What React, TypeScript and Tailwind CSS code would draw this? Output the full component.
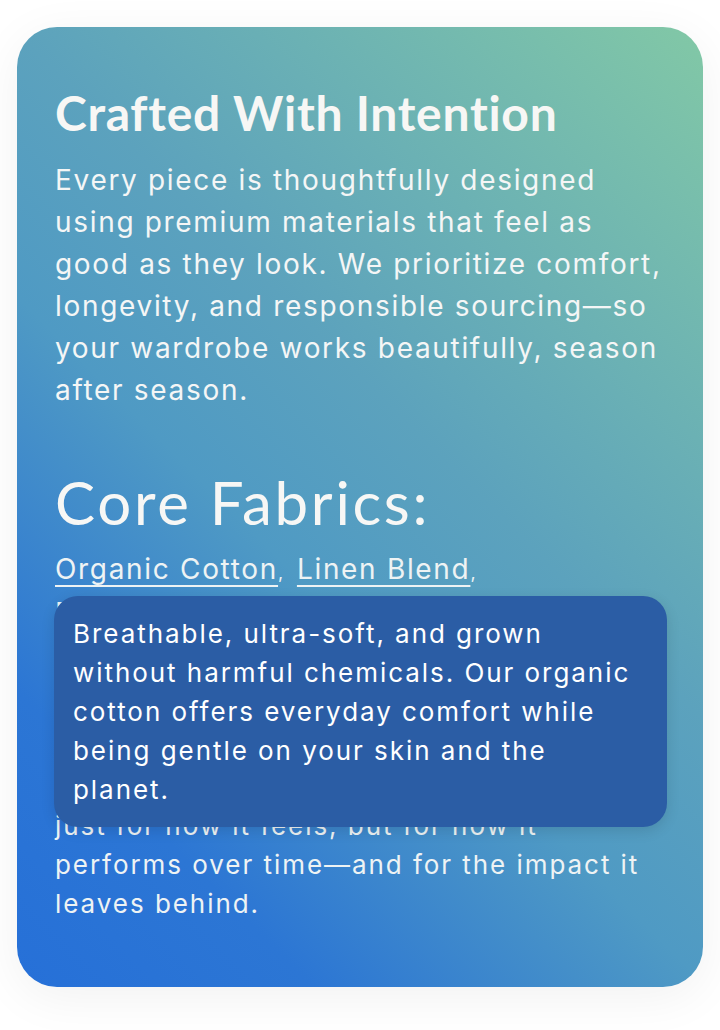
import { useState } from 'react'

const fabrics = ['Organic Cotton', 'Linen Blend', 'Deadstock Denim', 'Recycled Wool']

export default function App() {
  const [open] = useState('Organic Cotton')

  return (
    <div className="min-h-[1030px] bg-white px-[17px] pt-[27px] pb-[44px]">
      <section className="rounded-[40px] bg-[linear-gradient(45deg,#2670d8_0%,#2c76d4_18%,#4f9ac4_42%,#5ca2bd_58%,#82c8a6_100%)] px-[38px] pt-[58px] pb-[64px] text-white shadow-[0_10px_50px_rgba(0,0,0,0.06)] font-['Inter',sans-serif]">
        <h1 className="font-['Lato',sans-serif] text-[48px] font-bold leading-[56px] tracking-[0.015em] text-[#f7f7f5]">
          Crafted With Intention
        </h1>
        <p className="mt-[18px] text-[28px] leading-[42px] tracking-[0.06em] text-[#f4f6f6]">
          Every piece is thoughtfully designed using premium materials that feel as good as they look. We prioritize comfort, longevity, and responsible sourcing—so your wardrobe works beautifully, season after season.
        </p>

        <h2 className="mt-[55px] font-['Lato',sans-serif] text-[60px] font-normal leading-[72px] tracking-[0.045em] text-[#f7f7f5]">
          Core Fabrics:
        </h2>

        <div className="relative mt-[11px] text-[28px] leading-[40px] tracking-[0.06em] text-[#eef3f4]">
          <div className="flex flex-wrap">
            {fabrics.map((f) => (
              <span key={f} className="mr-[12px]">
                <span className="underline decoration-[2px] underline-offset-[6px]">{f}</span>
                <span className="text-[18px]">,</span>
              </span>
            ))}
          </div>

          {open && (
            <div className="absolute left-[-1px] top-[47px] z-10 w-[613px] rounded-[24px] bg-[#2b5da5] px-[19px] pt-[18px] pb-[18px] text-[26px] leading-[39px] tracking-[0.075em] text-white shadow-[0_4px_14px_rgba(0,0,0,0.12)]">
              Breathable, ultra-soft, and grown without harmful chemicals. Our organic cotton offers everyday comfort while being gentle on your skin and the planet.
            </div>
          )}

          <p className="mt-[13px] text-[26px] leading-[39px] tracking-[0.075em]">
            We partner with trusted mills and growers to source fabrics that meet our standards for quality, durability, and ethics. Every material is chosen not
            <br />
            just for how it feels, but for how it performs over time—and for the impact it leaves behind.
          </p>
        </div>
      </section>
    </div>
  )
}
